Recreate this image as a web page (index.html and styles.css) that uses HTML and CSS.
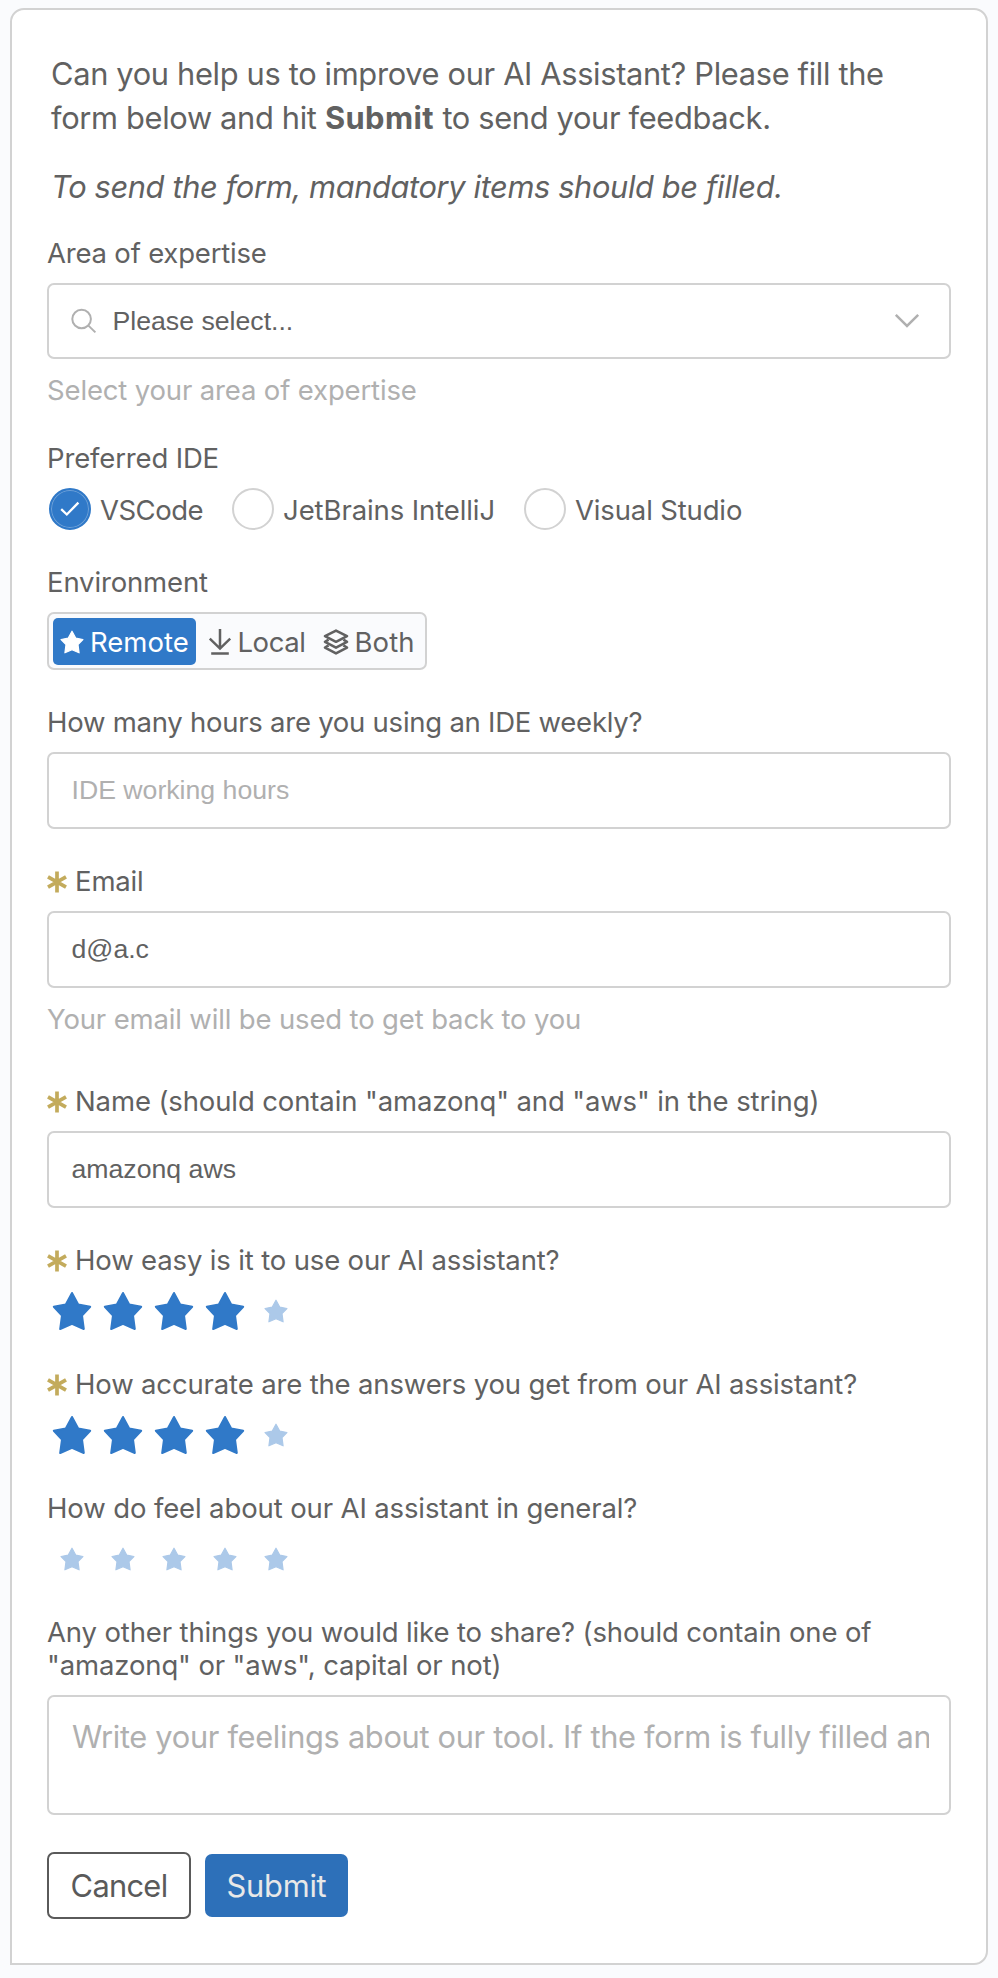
FILE: index.html
```html
<!DOCTYPE html>
<html lang="en">
<head>
<meta charset="utf-8">
<title>Feedback form</title>
<link rel="stylesheet" href="styles.css">
</head>
<body>
<svg class="defs" width="0" height="0" aria-hidden="true">
  <symbol id="star" viewBox="0 0 40 40">
    <path d="M20 2 L26.2 13.4 L38.2 15.8 L30 24.5 L31.8 38 L20 32.8 L8.2 38 L10 24.5 L1.8 15.8 L13.8 13.4 Z" fill="currentColor" stroke="currentColor" stroke-width="2" stroke-linejoin="round"/>
  </symbol>
  <symbol id="asterisk" viewBox="0 0 20 22">
    <path d="M10 .5V21.5M1 5.8L19 16.2M19 5.8L1 16.2" fill="none" stroke="currentColor" stroke-width="3.7"/>
  </symbol>
</svg>
<main class="card">
  <div class="intro">
    <p>Can you help us to improve our AI Assistant? Please fill the<br>form below and hit <strong>Submit</strong> to send your feedback.</p>
    <p><em>To send the form, mandatory items should be filled.</em></p>
  </div>

  <section class="item item-area">
    <div class="label label-area">Area of expertise</div>
    <div class="field">
      <svg class="search" viewBox="0 0 26 26" fill="none" stroke="currentColor" stroke-width="2"><circle cx="10.6" cy="11" r="9.3"/><path d="M17.2 17.4L24.4 24.4"/></svg>
      <span class="value">Please select...</span>
      <svg class="chevron" viewBox="0 0 26 16" fill="none" stroke="currentColor" stroke-width="2.5"><path d="M1.8 1.8L13 13L24.2 1.8"/></svg>
    </div>
    <div class="hint">Select your area of expertise</div>
  </section>

  <section class="item">
    <div class="label">Preferred IDE</div>
    <div class="radios">
      <div class="radio"><span class="dot dot-on"><svg viewBox="0 0 20 16" fill="none" stroke="currentColor" stroke-width="2.3"><path d="M1.2 8.2L6.8 13.5L18.4 1.6"/></svg></span><span class="name-vscode">VSCode</span></div>
      <div class="radio"><span class="dot"></span><span class="name-jetbrains">JetBrains IntelliJ</span></div>
      <div class="radio"><span class="dot"></span><span>Visual Studio</span></div>
    </div>
  </section>

  <section class="item">
    <div class="label">Environment</div>
    <div class="segments">
      <div class="segment segment-on"><svg class="seg-icon" viewBox="0 0 40 40"><use href="#star"/></svg><span class="name-remote">Remote</span></div>
      <div class="segment segment-local"><svg class="seg-icon" viewBox="0 0 24 28" fill="none" stroke="currentColor" stroke-width="2.5"><path d="M12 1V20.5M1.8 10.6L12 20.6L22.2 10.6M3.2 25.5H20.8"/></svg><span class="name-local">Local</span></div>
      <div class="segment segment-both"><svg class="seg-icon" viewBox="0 0 26 26" fill="none" stroke="currentColor" stroke-width="2.6" stroke-linejoin="round"><path d="M13 1.6L24 7.2L13 12.8L2 7.2Z"/><path d="M5.6 10.6L2 12.8L13 18.6L24 12.8L20.4 10.6"/><path d="M5.6 16.4L2 18.6L13 24.4L24 18.6L20.4 16.4"/></svg><span class="name-both">Both</span></div>
    </div>
  </section>

  <section class="item">
    <div class="label label-hours">How many hours are you using an IDE weekly?</div>
    <div class="field"><span class="placeholder">IDE working hours</span></div>
  </section>

  <section class="item item-email">
    <div class="label"><svg class="required"><use href="#asterisk"/></svg>Email</div>
    <div class="field"><span class="value">d@a.c</span></div>
    <div class="hint">Your email will be used to get back to you</div>
  </section>

  <section class="item">
    <div class="label label-name"><svg class="required"><use href="#asterisk"/></svg>Name (should contain "amazonq" and "aws" in the string)</div>
    <div class="field"><span class="value">amazonq aws</span></div>
  </section>

  <section class="item">
    <div class="label"><svg class="required"><use href="#asterisk"/></svg>How easy is it to use our AI assistant?</div>
    <div class="stars">
      <svg class="on"><use href="#star"/></svg><svg class="on"><use href="#star"/></svg><svg class="on"><use href="#star"/></svg><svg class="on"><use href="#star"/></svg><svg class="off"><use href="#star"/></svg>
    </div>
  </section>

  <section class="item">
    <div class="label"><svg class="required"><use href="#asterisk"/></svg>How accurate are the answers you get from our AI assistant?</div>
    <div class="stars">
      <svg class="on"><use href="#star"/></svg><svg class="on"><use href="#star"/></svg><svg class="on"><use href="#star"/></svg><svg class="on"><use href="#star"/></svg><svg class="off"><use href="#star"/></svg>
    </div>
  </section>

  <section class="item">
    <div class="label label-feel">How do feel about our AI assistant in general?</div>
    <div class="stars">
      <svg class="off"><use href="#star"/></svg><svg class="off"><use href="#star"/></svg><svg class="off"><use href="#star"/></svg><svg class="off"><use href="#star"/></svg><svg class="off"><use href="#star"/></svg>
    </div>
  </section>

  <section class="item">
    <div class="label label-share">Any other things you would like to share? (should contain one of<br>"amazonq" or "aws", capital or not)</div>
    <div class="field area"><span class="area-text">Write your feelings about our tool. If the form is fully filled and</span></div>
  </section>

  <div class="actions">
    <div class="button cancel">Cancel</div>
    <div class="button submit">Submit</div>
  </div>
</main>
</body>
</html>
```
FILE: styles.css
```css
* { box-sizing: border-box; }

body {
  margin: 0;
  padding: 8px 10px 13px 10px;
  background: #fafbfd;
  color: #616161;
  font-family: Inter, sans-serif;
  font-size: 27.5px;
  line-height: 33px;
  letter-spacing: -0.15px;
}

svg { display: block; flex: none; }
.defs { position: absolute; }

.card {
  height: 1957px;
  padding: 42px 35px 0;
  background: #fff;
  border: 2px solid #d2d2d2;
  border-radius: 14px 14px 14px 0;
}

.intro {
  padding-left: 4px;
  font-size: 30.8px;
  line-height: 44px;
  letter-spacing: -0.33px;
  white-space: nowrap;
}
.intro p { margin: 0 0 25px; }
.intro p + p { margin-bottom: 28px; }
.intro strong { font-weight: 700; letter-spacing: 0.45px; }
.intro em { letter-spacing: -0.37px; }

.item { margin-bottom: 36px; }
.item-area { margin-bottom: 35px; }
.item-email { margin-bottom: 49px; }

.label {
  display: flex;
  align-items: center;
  gap: 8px;
  margin-bottom: 13px;
  white-space: nowrap;
}
.label-area { letter-spacing: -0.2px; }
.label-hours { letter-spacing: -0.25px; }
.label-name, .label-feel { letter-spacing: -0.12px; }
.label-share { display: block; letter-spacing: -0.13px; }
.required { width: 20px; height: 22px; color: #c3ab5c; }

.field {
  display: flex;
  align-items: center;
  height: 77px;
  padding: 0 20px 0 22.5px;
  border: 2px solid #d2d2d2;
  border-radius: 7px;
  font-family: "Liberation Sans", Arial, sans-serif;
  font-size: 26.67px;
  letter-spacing: 0;
}
.item-area .field { height: 76px; padding-left: 21.5px; }
.placeholder { color: #b0b0b0; }
.search { width: 26px; height: 26px; color: #b0b0b0; margin-right: 16px; }
.chevron { width: 26px; height: 16px; color: #b0b0b0; margin-left: auto; margin-right: 9px; }
.hint { margin-top: 15px; color: #b0b0b0; letter-spacing: -0.15px; }

.radios { display: flex; gap: 29px; padding-left: 2px; }
.radio { display: flex; align-items: center; gap: 9px; height: 42px; white-space: nowrap; }
.radio span:last-child { padding-top: 2px; }
.dot { display: flex; align-items: center; justify-content: center; width: 42px; height: 42px; border: 2px solid #d2d2d2; border-radius: 50%; }
.dot-on { background: #3079c8; border-color: #3079c8; color: #fff; box-shadow: inset 0 0 0 1px #70a2d8; }
.dot-on svg { width: 20px; height: 16px; }
.name-vscode { letter-spacing: -0.5px; }
.name-jetbrains { letter-spacing: -0.1px; }

.segments {
  display: flex;
  width: 380px;
  height: 58px;
  padding: 4px;
  background: #fafbfd;
  border: 2px solid #d2d2d2;
  border-radius: 7px;
}
.segment { display: flex; align-items: center; height: 47px; white-space: nowrap; }
.segment span { padding-top: 1px; }
.segment-on { width: 143px; padding-left: 7px; gap: 6px; background: #3079c8; color: #fff; border-radius: 5px; }
.segment-on .seg-icon { width: 24px; height: 24px; }
.segment-local { padding-left: 12px; gap: 5.5px; }
.segment-local .seg-icon { width: 24px; height: 28px; }
.segment-both { padding-left: 17.5px; gap: 5.5px; }
.segment-both .seg-icon { width: 26px; height: 26px; }
.name-remote { letter-spacing: 0; }
.name-local { letter-spacing: -0.45px; }
.name-both { letter-spacing: 0.15px; }

.stars { display: flex; align-items: center; gap: 11px; height: 42px; padding: 0 0 1px 5px; }
.stars svg { width: 40px; height: 40px; }
.stars .on { color: #3079c8; }
.stars .off { width: 24px; height: 24px; margin: 0 8px; color: #acc9e9; }

.area {
  height: 120px;
  align-items: flex-start;
  padding: 18px 20px 0 23px;
  color: #b0b0b0;
  font-family: Inter, sans-serif;
  font-size: 30.8px;
  line-height: 44px;
  letter-spacing: -0.315px;
}
.area-text { width: 100%; overflow: hidden; white-space: nowrap; }

.actions { display: flex; align-items: center; gap: 14px; margin-top: 37px; }
.button {
  display: flex;
  align-items: center;
  justify-content: center;
  border-radius: 7px;
  font-size: 30.8px;
  line-height: 44px;
}
.cancel { width: 144px; height: 67px; border: 2px solid #5a5a5a; color: #5a5a5a; letter-spacing: -0.7px; }
.submit { width: 143px; height: 63px; background: #2d70b9; color: #e8e8e8; letter-spacing: -0.25px; }
```
